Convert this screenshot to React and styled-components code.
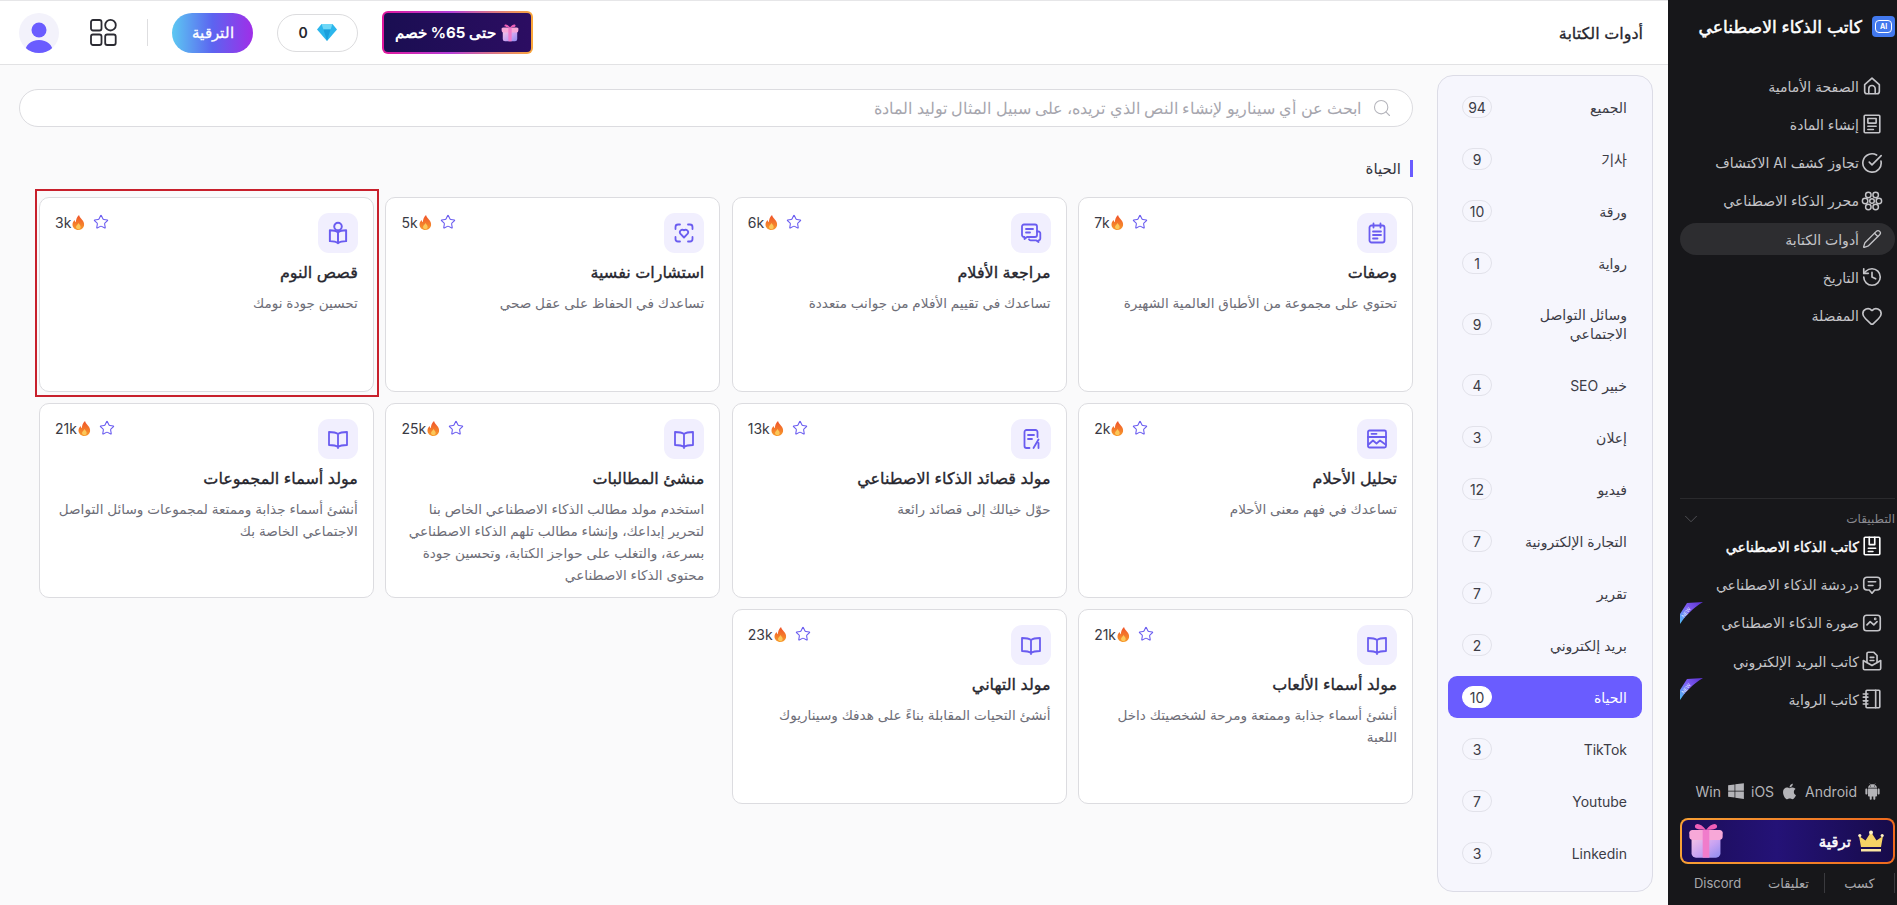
import React from 'react';
import styled, { createGlobalStyle } from 'styled-components';
import {
  Search,
  Star,
  ChevronDown,
  CircleCheckBig,
  Pencil,
  History,
  Heart,
} from 'lucide-react';
import { FaWindows } from 'react-icons/fa';
import { AiFillAndroid, AiFillApple } from 'react-icons/ai';

// Small drawn icons, everything that the icon packs do not have
const Line = ({ size = 22, strokeWidth = 1.8, children }) => (
  <svg
    width={size}
    height={size}
    viewBox="0 0 24 24"
    fill="none"
    stroke="currentColor"
    strokeWidth={strokeWidth}
    strokeLinecap="round"
    strokeLinejoin="round"
  >
    {children}
  </svg>
);

const cardIcons = {
  notes: (
    <Line size={24}>
      <rect x="4.5" y="4.5" width="15" height="17" rx="2" />
      <path d="M8.5 2.5v4M15.5 2.5v4M8 10.500h8M8 14h8M8 17.500h4.500" />
    </Line>
  ),
  chats: (
    <Line size={24}>
      <path d="M3 5.500a2 2 0 0 1 2-2h11a2 2 0 0 1 2 2V14a2 2 0 0 1-2 2H8l-2.500 2v-2H5a2 2 0 0 1-2-2z" />
      <path d="M7 8h7M7 11.500h4" />
      <path d="M18 10.500h1.500a1.800 1.800 0 0 1 1.800 1.800v5.200a1.800 1.800 0 0 1-1.800 1.800v1.700l-2.500-1.700h-5.500a1.800 1.800 0 0 1-1.500-1" />
    </Line>
  ),
  faceHeart: (
    <Line size={24}>
      <path d="M8 3.500H6a2.500 2.500 0 0 0-2.500 2.500v2M16 3.500h2A2.500 2.500 0 0 1 20.500 6v2M8 20.500H6A2.500 2.500 0 0 1 3.500 18v-2M16 20.500h2a2.500 2.500 0 0 0 2.500-2.500v-2" />
      <path d="M12 16.500l-3.700-3.800a2.500 2.500 0 0 1 3.700-3.300 2.500 2.500 0 0 1 3.700 3.300z" />
    </Line>
  ),
  bookPerson: (
    <Line size={26}>
      <circle cx="12" cy="6" r="3.500" />
      <path d="M12 11.500c-1.800-1.500-4.500-2-7.500-2v10c3 0 5.700.5 7.500 2 1.800-1.500 4.500-2 7.500-2v-10c-3 0-5.700.5-7.500 2zM12 11.500v10" />
    </Line>
  ),
  dream: (
    <Line size={24}>
      <rect x="3" y="3.500" width="18" height="17" rx="1.500" />
      <path d="M3 10h18M6.500 6.800h5M3.500 17.500l4.500-4 3.500 3 3.500-3 5.500 4" />
    </Line>
  ),
  poem: (
    <Line size={24}>
      <path d="M18.500 10V5a2 2 0 0 0-2-2h-9a2 2 0 0 0-2 2v14a2 2 0 0 0 2 2h3" />
      <path d="M9 8h6M9 12h4M14.500 21l5-8.500M19.500 21v-5" />
    </Line>
  ),
  book: (
    <Line size={24}>
      <path d="M12 7c-2-1.500-5-2-9-2v13c4 0 7 .5 9 2 2-1.500 5-2 9-2V5c-4 0-7 .5-9 2zM12 7v14" />
    </Line>
  ),
};

const HomeIcon = () => (
  <Line>
    <path d="M4 10.500 12 3.500l8 7V18a2.500 2.500 0 0 1-2.500 2.500h-11A2.500 2.500 0 0 1 4 18z" />
    <path d="M8.500 20v-5a3.500 3.500 0 0 1 7 0v5" />
  </Line>
);

const ContentIcon = () => (
  <Line>
    <rect x="3.500" y="2.500" width="17" height="19" rx="1" />
    <rect x="7.500" y="6" width="9" height="5" />
    <path d="M7.500 14.500h9M7.500 18h6" />
  </Line>
);

const AtomIcon = () => (
  <Line strokeWidth={1.6}>
    <circle cx="12" cy="12" r="2.500" />
    <circle cx="8" cy="5.500" r="3" />
    <circle cx="16" cy="5.500" r="3" />
    <circle cx="8" cy="18.500" r="3" />
    <circle cx="16" cy="18.500" r="3" />
    <circle cx="4.500" cy="12" r="3" />
    <circle cx="19.500" cy="12" r="3" />
  </Line>
);

const WriterIcon = () => (
  <Line>
    <rect x="3.500" y="2.500" width="17" height="19" rx="1" />
    <path d="M9 2.500v8h6v-8M8 14.500h8M8 18h5" />
  </Line>
);

const ChatIcon = () => (
  <Line>
    <path d="M3 7a3.500 3.500 0 0 1 3.500-3.500h11A3.500 3.500 0 0 1 21 7v7a3.500 3.500 0 0 1-3.500 3.500H15L12 21l-3-3.500H6.500A3.500 3.500 0 0 1 3 14z" />
    <path d="M8 8.500h8M8 12.500h5" />
  </Line>
);

const ImageIcon = () => (
  <Line>
    <rect x="3" y="3.500" width="18" height="17" rx="3" />
    <path d="M6.500 14l3.500-3.500 4 3.500 3.500-3.500" />
    <circle cx="15.500" cy="7.500" r=".6" />
  </Line>
);

const MailIcon = () => (
  <Line size={24}>
    <path d="M2.500 11.500v8.500a1.500 1.500 0 0 0 1.500 1.500h16a1.500 1.500 0 0 0 1.500-1.500v-8.500L12 17z" />
    <path d="M6.500 13.500V4a1.500 1.500 0 0 1 1.500-1.500h6l3.500 3.500v7.500M10 8h4M10 11.500h4" />
  </Line>
);

const NotebookIcon = () => (
  <Line>
    <rect x="5.500" y="2.500" width="15" height="19" rx="1" />
    <path d="M2.500 6.500h5M2.500 10h5M2.500 14h5M2.500 17.500h5M16 2.500v19" />
  </Line>
);

const GridIcon = () => (
  <svg width="27" height="27" viewBox="0 0 27 27" fill="none" stroke="#2b2b33" strokeWidth="1.800">
    <rect x="1" y="1" width="10.500" height="10.500" rx="2" />
    <circle cx="20.500" cy="6.200" r="5.300" />
    <rect x="1" y="15.500" width="10.500" height="10.500" rx="2" />
    <rect x="15.200" y="15.500" width="10.500" height="10.500" rx="2" />
  </svg>
);

const Fire = () => (
  <svg width="13" height="15" viewBox="0 0 13 15">
    <defs>
      <linearGradient id="fireFill" x1="0" y1="0" x2="0" y2="1">
        <stop offset="0" stopColor="#f0522a" />
        <stop offset="1" stopColor="#f79a2c" />
      </linearGradient>
    </defs>
    <path
      d="M7 0c.6 2.500 2 3.300 3.700 5.500 1.500 2 1.900 4.500.8 6.500C10.500 13.900 8.600 15 6.400 15 3 15 .5 12.600.5 9.500c0-2 1-3.400 2-4.500.2 1 .6 1.700 1.400 2.200C3.900 4.600 5 2 7 0z"
      fill="url(#fireFill)"
    />
    <path d="M6.500 8c.3 1.200 2.200 2 2.200 4 0 1.200-1 2.200-2.300 2.200S4 13.200 4 12c0-1.700 2-2.300 2.500-4z" fill="#fbc75a" />
  </svg>
);

const Diamond = () => (
  <svg width="20" height="17" viewBox="0 0 20 17">
    <path d="M4.500 0h11L20 5.500 10 17 0 5.500z" fill="#2cb6ec" />
    <path d="M4.500 0h11l-2 5.500h-7z" fill="#6fd8f7" />
    <path d="M6.500 5.500h7L10 17z" fill="#1b9fdc" />
  </svg>
);

const Gift = ({ size }) => (
  <svg width={size} height={size} viewBox="0 0 36 36">
    <defs>
      <linearGradient id={`box${size}`} x1="0" y1="0" x2="1" y2="1">
        <stop offset="0" stopColor="#f9c4e4" />
        <stop offset=".55" stopColor="#c9a3f2" />
        <stop offset="1" stopColor="#8d8cf0" />
      </linearGradient>
    </defs>
    <path d="M5 14h26v15a4 4 0 0 1-4 4H9a4 4 0 0 1-4-4z" fill={`url(#box${size})`} />
    <path d="M3 12a3 3 0 0 1 3-4h24a3 3 0 0 1 3 4v2a3 3 0 0 1-3 3H6a3 3 0 0 1-3-3z" fill="#f7a8d8" />
    <path d="M15 8h6v25h-6z" fill="#f07ccb" />
    <path d="M18 8c-4-6-10-7-10-3 0 2.500 5 3 10 3zm0 0c4-6 10-7 10-3 0 2.500-5 3-10 3z" fill="#ee5fb8" />
  </svg>
);

const Crown = () => (
  <svg width="26" height="23" viewBox="0 0 26 23">
    <path d="M3 17 1 6l6.500 4.500L13 2l5.500 8.500L25 6l-2 11z" fill="#f6d365" />
    <circle cx="13" cy="2.500" r="2" fill="#fff3c4" />
    <circle cx="1.800" cy="5.500" r="1.600" fill="#fff3c4" />
    <circle cx="24.200" cy="5.500" r="1.600" fill="#fff3c4" />
    <rect x="3" y="19" width="20" height="2.500" fill="#fbe6a2" />
  </svg>
);

const Avatar = () => (
  <AvatarWrap>
    <svg width="30" height="32" viewBox="0 0 30 32">
      <circle cx="15" cy="9" r="7.500" fill="#6a5cff" />
      <path d="M1 32c0-8 6-13 14-13s14 5 14 13c-4 2-24 2-28 0z" fill="#6a5cff" />
    </svg>
  </AvatarWrap>
);

const NewRibbon = () => (
  <RibbonWrap>
    <svg width="24" height="23" viewBox="0 0 24 23">
      <defs>
        <linearGradient id="ribbonFill" x1="0" y1="1" x2="1" y2="0">
          <stop offset="0" stopColor="#4fc3f7" />
          <stop offset=".5" stopColor="#7f5ff2" />
          <stop offset="1" stopColor="#5a2fd0" />
        </linearGradient>
      </defs>
      <path d="M0 22V12L7 1 23 0C13 6 6 13 0 22z" fill="url(#ribbonFill)" />
      <text
        x="7.500"
        y="11.500"
        fontSize="5"
        textAnchor="middle"
        fill="#dfe6ff"
        fontFamily="Inter, sans-serif"
        transform="rotate(-52 7.500 11.500)"
      >
        NEW
      </text>
    </svg>
  </RibbonWrap>
);

const navItems = [
  { label: 'الصفحة الأمامية', icon: <HomeIcon /> },
  { label: 'إنشاء المادة', icon: <ContentIcon /> },
  { label: 'تجاوز كشف AI الاكتشاف', icon: <CircleCheckBig size={22} strokeWidth={1.8} /> },
  { label: 'محرر الذكاء الاصطناعي', icon: <AtomIcon /> },
  { label: 'أدوات الكتابة', icon: <Pencil size={20} strokeWidth={1.6} />, active: true },
  { label: 'التاريخ', icon: <History size={22} strokeWidth={1.8} /> },
  { label: 'المفضلة', icon: <Heart size={22} strokeWidth={1.8} /> },
];

const appItems = [
  { label: 'كاتب الذكاء الاصطناعي', icon: <WriterIcon />, current: true },
  { label: 'دردشة الذكاء الاصطناعي', icon: <ChatIcon /> },
  { label: 'صورة الذكاء الاصطناعي', icon: <ImageIcon />, isNew: true },
  { label: 'كاتب البريد الإلكتروني', icon: <MailIcon /> },
  { label: 'كاتب الرواية', icon: <NotebookIcon />, isNew: true },
];

const categories = [
  { label: 'الجميع', count: 94 },
  { label: '기사', count: 9 },
  { label: 'ورقة', count: 10 },
  { label: 'رواية', count: 1 },
  { label: 'وسائل التواصل الاجتماعي', count: 9 },
  { label: 'خبير SEO', count: 4 },
  { label: 'إعلان', count: 3 },
  { label: 'فيديو', count: 12 },
  { label: 'التجارة الإلكترونية', count: 7 },
  { label: 'تقرير', count: 7 },
  { label: 'بريد إلكتروني', count: 2 },
  { label: 'الحياة', count: 10, active: true },
  { label: 'TikTok', count: 3 },
  { label: 'Youtube', count: 7 },
  { label: 'Linkedin', count: 3 },
];

const tools = [
  { title: 'وصفات', desc: 'تحتوي على مجموعة من الأطباق العالمية الشهيرة', uses: '7k', icon: 'notes' },
  { title: 'مراجعة الأفلام', desc: 'تساعدك في تقييم الأفلام من جوانب متعددة', uses: '6k', icon: 'chats' },
  { title: 'استشارات نفسية', desc: 'تساعدك في الحفاظ على عقل صحي', uses: '5k', icon: 'faceHeart' },
  { title: 'قصص النوم', desc: 'تحسين جودة نومك', uses: '3k', icon: 'bookPerson', highlighted: true },
  { title: 'تحليل الأحلام', desc: 'تساعدك في فهم معنى الأحلام', uses: '2k', icon: 'dream' },
  { title: 'مولد قصائد الذكاء الاصطناعي', desc: 'حوّل خيالك إلى قصائد رائعة', uses: '13k', icon: 'poem' },
  {
    title: 'منشئ المطالبات',
    desc: 'استخدم مولد مطالب الذكاء الاصطناعي الخاص بنا لتحرير إبداعك، وإنشاء مطالب تلهم الذكاء الاصطناعي بسرعة، والتغلب على حواجز الكتابة، وتحسين جودة محتوى الذكاء الاصطناعي',
    uses: '25k',
    icon: 'book',
  },
  { title: 'مولد أسماء المجموعات', desc: 'أنشئ أسماء جذابة وممتعة لمجموعات وسائل التواصل الاجتماعي الخاصة بك', uses: '21k', icon: 'book' },
  { title: 'مولد أسماء الألعاب', desc: 'أنشئ أسماء جذابة وممتعة ومرحة لشخصيتك داخل اللعبة', uses: '21k', icon: 'book' },
  { title: 'مولد التهاني', desc: 'أنشئ التحيات المقابلة بناءً على هدفك وسيناريوك', uses: '23k', icon: 'book' },
];

export default function App() {
  return (
    <Page dir="rtl">
      <GlobalStyle />
      <Sidebar>
        <Brand>
          <LogoTile><LogoBadge>AI</LogoBadge></LogoTile>
          <BrandName>كاتب الذكاء الاصطناعي</BrandName>
        </Brand>

        <NavList>
          {navItems.map(item => (
            <NavItem key={item.label} active={item.active}>
              <NavIcon>{item.icon}</NavIcon>
              {item.label}
            </NavItem>
          ))}
        </NavList>

        <AppsHead>
          <span>التطبيقات</span>
          <ChevronDown size={22} strokeWidth={1} color="#55555a" />
        </AppsHead>
        <NavList>
          {appItems.map(item => (
            <NavItem key={item.label} current={item.current}>
              <NavIcon>{item.icon}</NavIcon>
              {item.label}
              {item.isNew && <NewRibbon />}
            </NavItem>
          ))}
        </NavList>

        <Platforms>
          <AiFillAndroid size={19} />
          <span>Android</span>
          <AiFillApple size={19} />
          <span>iOS</span>
          <FaWindows size={18} />
          <span>Win</span>
        </Platforms>

        <UpgradeBar>
          <Crown />
          <UpgradeText>ترقية</UpgradeText>
          <UpgradeGift><Gift size={40} /></UpgradeGift>
        </UpgradeBar>

        <FooterLinks>
          <FooterLink divided>كسب</FooterLink>
          <FooterLink>تعليقات</FooterLink>
          <FooterLink>Discord</FooterLink>
        </FooterLinks>
      </Sidebar>

      <Main>
        <Header>
          <HeaderTitle>أدوات الكتابة</HeaderTitle>
          <HeaderTools>
            <PromoButton>
              <Gift size={20} />
              حتى 65% خصم
            </PromoButton>
            <CoinPill>
              <Diamond />
              <span>0</span>
            </CoinPill>
            <UpgradeButton>الترقية</UpgradeButton>
            <HeaderDivider />
            <GridButton><GridIcon /></GridButton>
            <Avatar />
          </HeaderTools>
        </Header>

        <Body>
          <CategoryPanel>
            {categories.map(cat => (
              <CategoryRow key={cat.label} active={cat.active}>
                <CategoryName>{cat.label}</CategoryName>
                <CountBadge active={cat.active}>{cat.count}</CountBadge>
              </CategoryRow>
            ))}
          </CategoryPanel>

          <Content>
            <SearchBox>
              <Search size={20} strokeWidth={1.3} color="#b5b5bc" />
              <SearchInput placeholder="ابحث عن أي سيناريو لإنشاء النص الذي تريده، على سبيل المثال توليد المادة" />
            </SearchBox>

            <SectionTitle>الحياة</SectionTitle>

            <CardGrid>
              {tools.map(tool => (
                <Card key={tool.title} highlighted={tool.highlighted}>
                  <CardTop>
                    <IconTile>{cardIcons[tool.icon]}</IconTile>
                    <Meta dir="ltr">
                      <span>{tool.uses}</span>
                      <Fire />
                      <StarButton><Star size={16} strokeWidth={1.6} /></StarButton>
                    </Meta>
                  </CardTop>
                  <CardTitle>{tool.title}</CardTitle>
                  <CardDesc>{tool.desc}</CardDesc>
                </Card>
              ))}
            </CardGrid>
          </Content>
        </Body>
      </Main>
    </Page>
  );
}

const GlobalStyle = createGlobalStyle`
  * {
    box-sizing: border-box;
  }

  html, body {
    margin: 0;
    padding: 0;
    height: 905px;
    overflow: hidden;
    background: #fafafb;
    font-family: Inter, "Noto Sans", "DejaVu Sans", "Noto Sans CJK KR", sans-serif;
  }
`;

const Page = styled.div`
  display: flex;
  width: 1897px;
  height: 905px;
`;

const Sidebar = styled.aside`
  flex: none;
  width: 229px;
  min-width: 0;
  display: flex;
  flex-direction: column;
  padding: 0 2px 12px 12px;
  background: #17171a;
  color: #c4c4c8;
`;

const Brand = styled.div`
  display: flex;
  align-items: center;
  gap: 10px;
  height: 54px;
  margin-bottom: 17px;
`;

const LogoTile = styled.div`
  display: flex;
  align-items: center;
  justify-content: center;
  width: 23px;
  height: 21px;
  border-radius: 4px;
  background: #4279ee;
`;

const LogoBadge = styled.span`
  display: flex;
  align-items: center;
  justify-content: center;
  width: 17px;
  height: 13px;
  border: 1.5px solid #fff;
  border-radius: 4px;
  color: #fff;
  font-size: 7px;
  font-weight: 700;
`;

const BrandName = styled.div`
  color: #fff;
  font-size: 17.200px;
  white-space: nowrap;
  -webkit-text-stroke: 0.5px #fff;
`;

const NavList = styled.nav`
  display: flex;
  flex-direction: column;
  gap: 6.250px;
`;

const NavItem = styled.a`
  position: relative;
  display: flex;
  align-items: center;
  gap: 2px;
  height: 32px;
  padding-right: 12px;
  border-radius: 16px;
  background: ${props => (props.active ? '#2d2d30' : 'transparent')};
  color: ${props => (props.current ? '#fff' : '#c4c4c8')};
  font-size: 14px;
  white-space: nowrap;
  -webkit-text-stroke: ${props => (props.current ? '0.4px #fff' : '0')};
`;

const NavIcon = styled.span`
  display: flex;
  align-items: center;
  justify-content: center;
  width: 22px;
  height: 22px;
  -webkit-text-stroke: 0;
`;

const RibbonWrap = styled.span`
  position: absolute;
  top: -5px;
  left: 0;
  display: flex;
`;

const AppsHead = styled.div`
  display: flex;
  align-items: center;
  justify-content: space-between;
  height: 33px;
  margin-top: 166px;
  padding-top: 9px;
  border-top: 1px solid #2a2a2d;
  color: #8a8a90;
  font-size: 12px;
`;

const Platforms = styled.div`
  display: flex;
  align-items: center;
  gap: 6px;
  height: 20px;
  margin-top: 66px;
  padding-right: 13px;
  color: #b4b4b8;
  font-size: 14px;
`;

const UpgradeBar = styled.div`
  display: flex;
  align-items: center;
  gap: 7px;
  height: 47px;
  margin-top: 17px;
  padding: 0 9px 0 4px;
  border: 2px solid transparent;
  border-radius: 8px;
  background:
    linear-gradient(90deg, #1c0d58, #241277 45%, #170b4a) padding-box,
    linear-gradient(90deg, #f7a035, #ee6a1e) border-box;
  color: #fff;
`;

const UpgradeText = styled.span`
  font-size: 15px;
  -webkit-text-stroke: 0.5px #fff;
`;

const UpgradeGift = styled.span`
  display: flex;
  margin-right: auto;
`;

const FooterLinks = styled.div`
  display: grid;
  grid-template-columns: repeat(3, 71px);
  height: 20px;
  margin-top: 9px;
`;

const FooterLink = styled.a`
  display: flex;
  align-items: center;
  justify-content: center;
  border-left: ${props => (props.divided ? '1px solid #3a3a3e' : 'none')};
  border-right: ${props => (props.divided ? '1px solid #3a3a3e' : 'none')};
  color: #a8a8ac;
  font-size: 13px;
`;

const Main = styled.main`
  flex: 1;
  min-width: 0;
  display: flex;
  flex-direction: column;
`;

const Header = styled.header`
  display: flex;
  align-items: center;
  justify-content: space-between;
  height: 65px;
  padding: 0 25px 0 19px;
  border-top: 1px solid #e6e6e8;
  border-bottom: 1px solid #e2e2e4;
  background: #fff;
`;

const HeaderTitle = styled.h1`
  margin: 0;
  color: #26262e;
  font-size: 16px;
  font-weight: 400;
  -webkit-text-stroke: 0.3px #26262e;
`;

const HeaderTools = styled.div`
  display: flex;
  align-items: center;
  gap: 24px;
`;

const PromoButton = styled.button`
  display: flex;
  align-items: center;
  justify-content: center;
  gap: 4px;
  width: 151px;
  height: 43px;
  border: 2px solid transparent;
  border-radius: 6px;
  background:
    linear-gradient(90deg, #1a0e52, #2c0d62) padding-box,
    linear-gradient(90deg, #e0189c, #b53fd8 45%, #fba83a) border-box;
  color: #fff;
  font: 700 15px Inter, "Noto Sans", sans-serif;
`;

const CoinPill = styled.div`
  display: flex;
  align-items: center;
  justify-content: center;
  gap: 9px;
  width: 81px;
  height: 38px;
  border: 1px solid #dcdcde;
  border-radius: 19px;
  background: #fff;
  color: #26262e;
  font-size: 14px;
  font-weight: 600;
`;

const UpgradeButton = styled.button`
  width: 81px;
  height: 40px;
  border: none;
  border-radius: 20px;
  background: linear-gradient(90deg, #5cc8f2, #5c64f0 50%, #a02ee8);
  color: #fff;
  font: 400 15px Inter, "Noto Sans", sans-serif;
  -webkit-text-stroke: 0.3px #fff;
`;

const HeaderDivider = styled.div`
  width: 1px;
  height: 27px;
  margin-left: 6px;
  background: #dedee0;
`;

const GridButton = styled.div`
  display: flex;
  margin-left: 7px;
`;

const AvatarWrap = styled.div`
  display: flex;
  align-items: flex-end;
  justify-content: center;
  width: 40px;
  height: 40px;
  overflow: hidden;
  border-radius: 50%;
  background: #f3f2fb;
`;

const Body = styled.div`
  flex: 1;
  min-height: 0;
  display: flex;
  gap: 24px;
  padding: 10px 15px 13px 19px;
`;

const CategoryPanel = styled.div`
  flex: 0 0 216px;
  display: flex;
  flex-direction: column;
  gap: 10px;
  padding: 10px 10px 0;
  border: 1px solid #dcdce6;
  border-radius: 16px;
  background: #f6f6fd;
`;

const CategoryRow = styled.div`
  display: flex;
  align-items: center;
  justify-content: space-between;
  min-height: 42px;
  padding: 0 15px 0 14px;
  border-radius: 9px;
  background: ${props => (props.active ? '#6a5cff' : 'transparent')};
  color: ${props => (props.active ? '#fff' : '#3c3c46')};
`;

const CategoryName = styled.span`
  max-width: 125px;
  padding: 11px 0;
  font-size: 14px;
  line-height: 19px;
`;

const CountBadge = styled.span`
  display: flex;
  align-items: center;
  justify-content: center;
  min-width: 30px;
  height: 22px;
  padding: 0 4px;
  border: 1px solid ${props => (props.active ? '#fff' : '#e2e2ea')};
  border-radius: 11px;
  background: ${props => (props.active ? '#fff' : 'transparent')};
  color: #3c3c46;
  font-size: 14px;
`;

const Content = styled.section`
  flex: 1;
  min-width: 0;
  padding-top: 14px;
`;

const SearchBox = styled.label`
  display: flex;
  align-items: center;
  gap: 9px;
  height: 38px;
  padding: 0 20px;
  border: 1px solid #dcdce0;
  border-radius: 19px;
  background: #fff;
`;

const SearchInput = styled.input`
  flex: 1;
  border: none;
  outline: none;
  background: transparent;
  font: 15.600px Inter, "Noto Sans", sans-serif;

  &::placeholder {
    color: #a6a6ae;
  }
`;

const SectionTitle = styled.h2`
  height: 17px;
  margin: 33px 0 20px;
  padding-right: 9px;
  border-right: 3px solid #6a5cff;
  color: #33333b;
  font-size: 15px;
  font-weight: 400;
  line-height: 17px;
`;

const CardGrid = styled.div`
  display: grid;
  grid-template-columns: repeat(4, 1fr);
  grid-auto-rows: 195px;
  gap: 11px 11.500px;
  padding-left: 20px;
`;

const Card = styled.article`
  position: relative;
  padding: 15px;
  border: 1px solid #dcdce0;
  border-radius: 10px;
  background: #fff;

  ${props => props.highlighted && `
    &::after {
      content: '';
      position: absolute;
      top: -9px;
      left: -5px;
      right: -6px;
      bottom: -6px;
      border: 2px solid #c8202c;
      pointer-events: none;
    }
  `}
`;

const CardTop = styled.div`
  display: flex;
  align-items: flex-start;
  justify-content: space-between;
  height: 40px;
`;

const IconTile = styled.div`
  display: flex;
  align-items: center;
  justify-content: center;
  width: 40px;
  height: 40px;
  border-radius: 11px;
  background: #f1effe;
  color: #6a5cf0;
`;

const Meta = styled.div`
  display: flex;
  align-items: center;
  gap: 1px;
  height: 18px;
  color: #3a3a44;
  font-size: 14px;
`;

const StarButton = styled.span`
  display: flex;
  margin-left: 7px;
  color: #6a5cf0;
`;

const CardTitle = styled.h3`
  margin: 8px 0 0;
  color: #26262e;
  font-size: 16px;
  font-weight: 400;
  line-height: 22px;
  -webkit-text-stroke: 0.35px #26262e;
`;

const CardDesc = styled.p`
  margin: 9px 0 0;
  color: #6e6e78;
  font-size: 13.600px;
  line-height: 22px;
`;
